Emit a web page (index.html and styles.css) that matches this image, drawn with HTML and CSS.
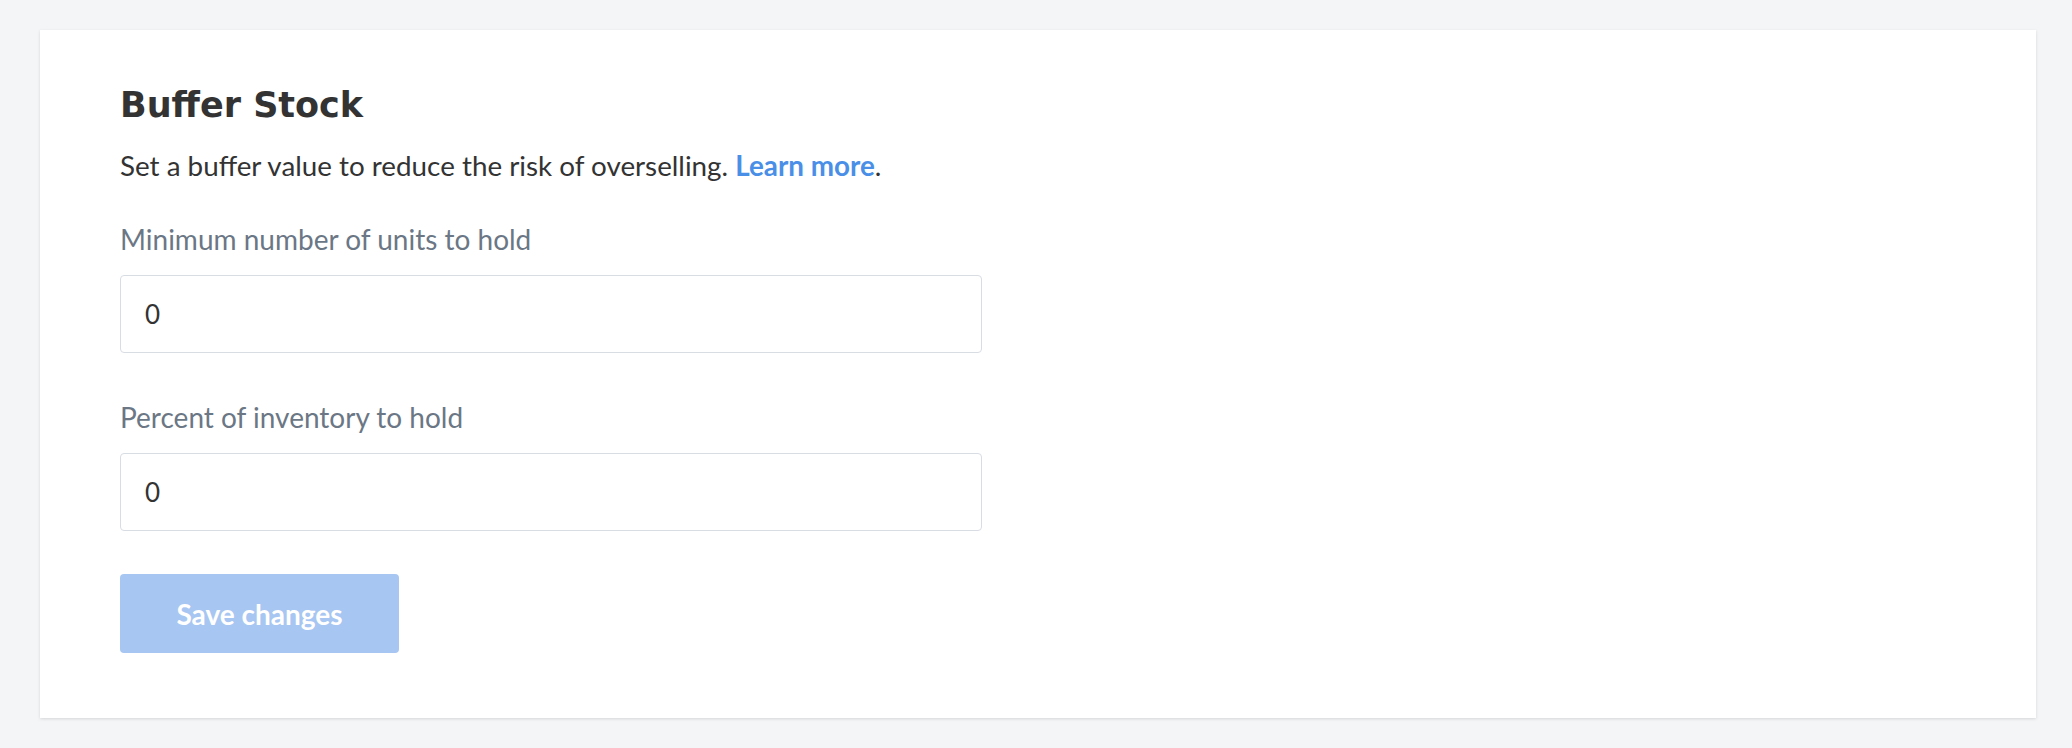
FILE: index.html
```html
<!DOCTYPE html>
<html lang="en">
<head>
    <meta charset="UTF-8">
    <title>Buffer Stock</title>
    <link rel="stylesheet" href="styles.css">
</head>
<body>
    <div class="card">
        <h1 class="card-title">Buffer Stock</h1>
        <p class="card-desc">Set a buffer value to reduce the risk of overselling. <a href="#">Learn more</a>.</p>
        <form class="bs-form">
            <div class="bs-field">
                <label for="units">Minimum number of units to hold</label>
                <input id="units" type="text" value="0">
            </div>
            <div class="bs-field">
                <label for="percent">Percent of inventory to hold</label>
                <input id="percent" type="text" value="0">
            </div>
            <button type="button" class="bs-save" disabled>Save changes</button>
        </form>
    </div>
</body>
</html>
```

FILE: styles.css
```css
html,
body {
    margin: 0;
    height: 100%;
}

body {
    box-sizing: border-box;
    padding: 30px 36px 30px 40px;
    background-color: #f4f5f7;
    font-family: Lato, "Open Sans", sans-serif;
    color: #333;
}

p {
    margin: 0;
}

a {
    color: #4a8fe7;
    font-weight: bold;
    text-decoration: none;
}

.card {
    padding: 54px 80px 65px;
    background-color: #fff;
    box-shadow: 0 1px 3px rgba(0,0,0,0.13);
}

.card-title {
    margin: 0;
    font-family: "DejaVu Sans", Inter, sans-serif;
    font-size: 35px;
    font-weight: 700;
    line-height: 42px;
    color: #333;
}

.card-desc {
    margin-top: 22px;
    font-size: 27.8px;
    line-height: 36px;
}

.bs-form {
    display: flex;
    flex-direction: column;
    align-items: flex-start;
    margin-top: 37px;
}

.bs-field {
    display: flex;
    flex-direction: column;
}

.bs-field+.bs-field {
    margin-top: 46px;
}

.bs-field>label {
    margin-bottom: 18px;
    font-size: 28px;
    line-height: 36px;
    color: #6b7785;
}

.bs-field>input {
    box-sizing: border-box;
    width: 862px;
    height: 78px;
    padding: 0 24px;
    border: 1px solid #d8dde3;
    border-radius: 4px;
    outline: none;
    font-family: Lato, "Open Sans", sans-serif;
    font-size: 26px;
    color: #333;
}

.bs-save {
    margin-top: 43px;
    width: 279px;
    height: 79px;
    border: none;
    border-radius: 4px;
    background-color: #a7c6f2;
    font-family: Lato, "Open Sans", sans-serif;
    font-size: 28px;
    font-weight: bold;
    color: #fff;
}
```
